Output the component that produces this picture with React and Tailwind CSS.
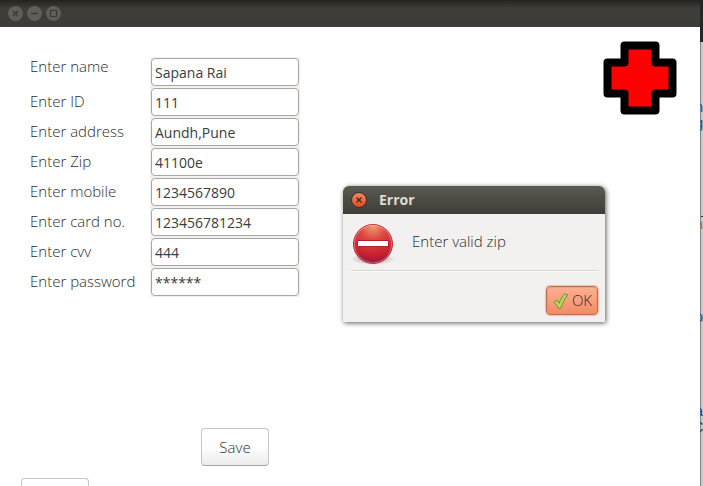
const fields = [
  { id: 'name', label: 'Enter name', value: 'Sapana Rai', raised: true },
  { id: 'id', label: 'Enter ID', value: '111' },
  { id: 'address', label: 'Enter address', value: 'Aundh,Pune' },
  { id: 'zip', label: 'Enter Zip', value: '41100e' },
  { id: 'mobile', label: 'Enter mobile', value: '1234567890' },
  { id: 'card', label: 'Enter card no.', value: '123456781234' },
  { id: 'cvv', label: 'Enter cvv', value: '444' },
  { id: 'password', label: 'Enter password', value: '******' },
];

const glyphs = {
  close: 'M5 5l5 5M10 5l-5 5',
  minimize: 'M4 7.5h7',
  maximize: 'M4.5 4.5h6v6h-6z',
};

function WindowButton({ kind, label }) {
  return (
    <button type="button" aria-label={label} className="size-[15px] rounded-full bg-[#605e58] text-[#3a3935]">
      <svg viewBox="0 0 15 15" className="size-full" fill="none" stroke="currentColor" strokeWidth="1.2">
        <path d={glyphs[kind]} />
      </svg>
    </button>
  );
}

function TitleBar() {
  return (
    <header className="flex h-[27px] shrink-0 items-center gap-1 rounded-tr-md bg-linear-to-b from-[#24231f] via-[#3e3d38] via-30% to-[#3c3b37] px-2">
      <WindowButton kind="close" label="Close" />
      <WindowButton kind="minimize" label="Minimize" />
      <WindowButton kind="maximize" label="Maximize" />
    </header>
  );
}

function Field({ id, label, value, raised }) {
  return (
    <div className="flex">
      <label htmlFor={id} className={raised ? 'w-30 shrink-0 leading-[18px]' : 'w-30 shrink-0 leading-7'}>
        {label}
      </label>
      <div className="h-[30px] w-[150px] bg-[#f2f1f0] p-px">
        <input
          id={id}
          type="text"
          defaultValue={value}
          className="block h-7 w-full rounded border border-[#a9a6a3] bg-white px-[3px] text-sm font-normal text-[#3c3c3c] outline-none"
        />
      </div>
    </div>
  );
}

function RedCross() {
  return (
    <svg viewBox="0 0 74 74" className="mt-3.5 mr-[23px] size-[74px] shrink-0" role="img" aria-label="Red cross">
      <path
        d="M21.500 4.500h31v17h17v31h-17v17h-31v-17h-17v-31h17z"
        fill="#ff0000"
        stroke="#000"
        strokeWidth="8"
        strokeLinejoin="round"
      />
    </svg>
  );
}

function StopIcon() {
  return (
    <svg viewBox="0 0 44 44" className="size-11 shrink-0" aria-hidden="true">
      <defs>
        <radialGradient id="stop-fill" cx="0.5" cy="0.05" r="1">
          <stop offset="0" stopColor="#f09a72" />
          <stop offset="0.35" stopColor="#dc4540" />
          <stop offset="0.75" stopColor="#c9202b" />
          <stop offset="1" stopColor="#7c1450" />
        </radialGradient>
        <radialGradient id="stop-shadow">
          <stop offset="0.5" stopColor="#000" stopOpacity="0.2" />
          <stop offset="1" stopColor="#000" stopOpacity="0" />
        </radialGradient>
      </defs>
      <ellipse cx="22" cy="37" rx="22" ry="6" fill="url(#stop-shadow)" />
      <circle cx="22" cy="22" r="19.500" fill="url(#stop-fill)" stroke="#c4343a" />
      <circle cx="22" cy="22" r="18.500" fill="none" stroke="#fff" strokeOpacity="0.3" />
      <path d="M6.500 18.500h31v6h-31z" fill="#fff" stroke="#b81e2c" strokeWidth="1" />
    </svg>
  );
}

function CheckIcon() {
  return (
    <svg viewBox="0 0 18 18" className="size-[18px]" aria-hidden="true">
      <path
        d="M2 10.200l3-2 2.200 3.200C8.500 7.500 10.500 4 12.500 1.800l3.300 1C12.500 7 10.500 11.500 8.500 16.500H6.800C5.600 14 4 12 2 10.200z"
        fill="#b5d957"
        stroke="#6f9436"
        strokeWidth="1"
        strokeLinejoin="round"
      />
    </svg>
  );
}

function ErrorDialog() {
  return (
    <section
      role="alertdialog"
      aria-labelledby="error-title"
      aria-describedby="error-message"
      className="absolute top-[186px] left-[343px] w-[262px] rounded-t-md bg-[#f2f1f0] shadow-[1px_1px_5px_rgba(0,0,0,0.65)]"
    >
      <header className="flex h-7 items-center gap-3 rounded-t-md bg-linear-to-b from-[#5b5a50] to-[#3e3d38] px-2">
        <button
          type="button"
          aria-label="Close"
          className="size-4 rounded-full border border-[#35322d] bg-linear-to-b from-[#f58562] to-[#dc4a1d] text-[#3b2a20]"
        >
          <svg viewBox="0 0 14 14" className="size-full" fill="none" stroke="currentColor" strokeWidth="1.200">
            <path d="M4.500 4.500l5 5M9.500 4.500l-5 5" />
          </svg>
        </button>
        <h2 id="error-title" className="text-sm font-bold text-[#dfdbd2]">Error</h2>
      </header>
      <div className="pr-[7px] pb-[7px] pl-2">
        <div className="flex gap-[17px] border-b border-[#d8d6d3] pt-2 pb-1 shadow-[0_1px_0_#fbfbfa]">
          <StopIcon />
          <p id="error-message" className="pt-2 leading-[22px]">Enter valid zip</p>
        </div>
        <div className="flex justify-end pt-[15px]">
          <button
            type="button"
            className="flex h-[29px] w-[52px] items-center justify-center gap-0.5 rounded border border-[#b87056] bg-linear-to-b from-[#fdb093] to-[#f28c66] shadow-[inset_0_0_0_1px_rgba(255,130,90,0.45),0_0_1px_1px_rgba(240,145,110,0.5)]"
          >
            <CheckIcon />
            OK
          </button>
        </div>
      </div>
    </section>
  );
}

const fragments = [
  { text: 'n', className: 'pt-[58px] text-[#1d4f96]' },
  { text: 'g', className: 'text-[#1d4f96]' },
  { text: 'n', className: 'mt-[84px] border-t border-[#333] text-[#c96a2b]' },
  { text: 'o', className: 'mt-[77px] text-[#3a4677]' },
  { text: 'a', className: 'mt-[78px] text-[#1b3f94]' },
  { text: 'C', className: 'text-[#333333]' },
];

function BackgroundWindow() {
  return (
    <aside className="flex w-[3px] shrink-0 flex-col overflow-hidden bg-[#262626] pt-[42px] font-['Liberation_Mono',monospace] text-sm leading-4 font-normal">
      <div className="flex-1 border-l border-[#858585] bg-[#c9c9c9]">
        {fragments.map((item, index) => (
          <div key={index} className={item.className}>
            <span className="-ml-1.5">{item.text}</span>
          </div>
        ))}
      </div>
    </aside>
  );
}

const plainButton =
  'h-[38px] w-[68px] rounded border border-[#c6c6c6] border-b-[#a3a3a3] bg-linear-to-b from-white from-45% to-[#ececec]';

export default function App() {
  return (
    <div className="relative flex h-screen overflow-hidden bg-[#262626] font-['Open_Sans','Noto_Sans',sans-serif] text-[15px] font-light text-[#2c2c2c]">
      <div className="flex min-w-0 flex-1 flex-col">
        <TitleBar />
        <main className="flex-1 overflow-hidden bg-white">
          <div className="flex items-start justify-between">
            <form className="pt-[30px] pl-[30px]">
              {fields.map((field) => (
                <Field key={field.id} {...field} />
              ))}
            </form>
            <RedCross />
          </div>
          <div className="flex flex-col items-start gap-3 pt-[131px] pl-[21px]">
            <button type="button" className={`${plainButton} ml-[180px]`}>Save</button>
            <button type="button" aria-label="Back" className={plainButton} />
          </div>
        </main>
      </div>
      <BackgroundWindow />
      <ErrorDialog />
    </div>
  );
}
